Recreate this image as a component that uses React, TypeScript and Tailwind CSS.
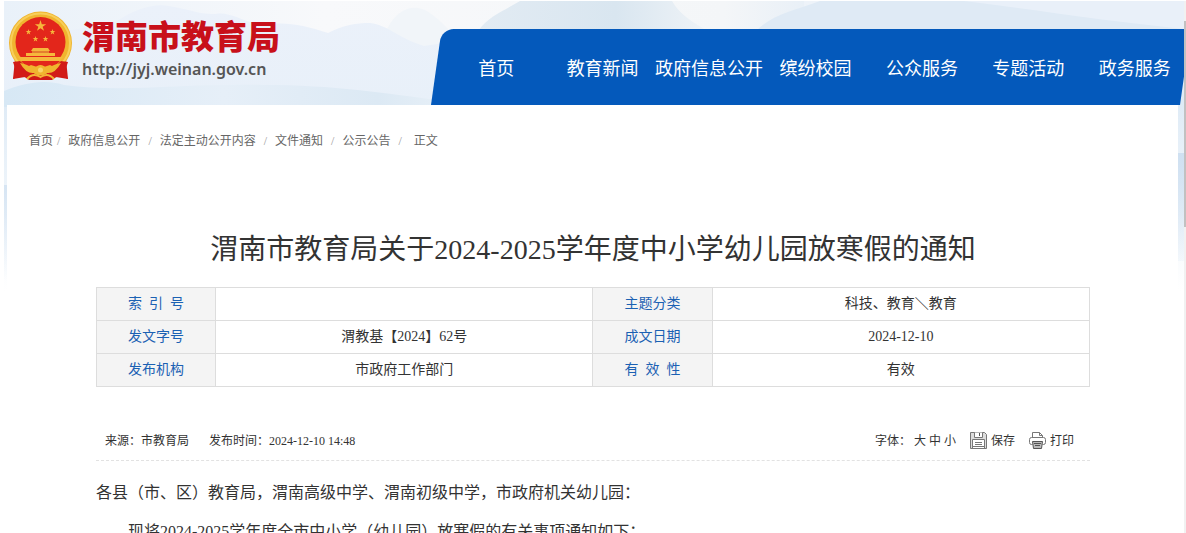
import React from 'react';

const NAV = ['首页', '教育新闻', '政府信息公开', '缤纷校园', '公众服务', '专题活动', '政务服务'];

const CRUMBS = ['首页', '政府信息公开', '法定主动公开内容', '文件通知', '公示公告'];

const ROWS = [
    ['索  引  号', '', '主题分类', '科技、教育＼教育'],
    ['发文字号', '渭教基【2024】62号', '成文日期', '2024-12-10'],
    ['发布机构', '市政府工作部门', '有  效  性', '有效'],
];

const STAR = '0,-1 0.22,-0.31 0.95,-0.31 0.36,0.12 0.59,0.81 0,0.38 -0.59,0.81 -0.36,0.12 -0.95,-0.31 -0.22,-0.31';

const Mountains: React.FC = () => (
    <svg className="absolute inset-0 h-[290px] w-full" viewBox="0 0 1180 290" preserveAspectRatio="none" aria-hidden="true">
        <defs>
            <linearGradient id="sky" x1="0" y1="0" x2="0" y2="1">
                <stop offset="0" stopColor="#eef3f9" />
                <stop offset="0.35" stopColor="#dfebf6" />
                <stop offset="1" stopColor="#ffffff" />
            </linearGradient>
            <linearGradient id="pale" x1="0" y1="0" x2="1" y2="0">
                <stop offset="0" stopColor="#e9f1f9" />
                <stop offset="0.4" stopColor="#f8f9fb" />
                <stop offset="0.9" stopColor="#f4f6f8" />
                <stop offset="1" stopColor="#e9f0f7" />
            </linearGradient>
            <linearGradient id="ridge" x1="0" y1="0" x2="0" y2="1">
                <stop offset="0" stopColor="#ebf1fa" />
                <stop offset="1" stopColor="#e8f0f9" />
            </linearGradient>
            <linearGradient id="peak" x1="0" y1="0" x2="1" y2="0">
                <stop offset="0" stopColor="#e2ebf3" />
                <stop offset="0.6" stopColor="#d9e6f0" />
                <stop offset="1" stopColor="#eff3f7" />
            </linearGradient>
            <linearGradient id="mist" x1="0" y1="0" x2="1" y2="0">
                <stop offset="0" stopColor="#d7e8f5" />
                <stop offset="0.5" stopColor="#e6eff8" />
                <stop offset="0.85" stopColor="#dce9f4" />
                <stop offset="1" stopColor="#e6eff7" />
            </linearGradient>
            <linearGradient id="slope" x1="0" y1="0" x2="0" y2="1">
                <stop offset="0" stopColor="#cfe0f1" />
                <stop offset="1" stopColor="#cfe0f1" stopOpacity="0" />
            </linearGradient>
        </defs>
        <rect width="1180" height="290" fill="url(#sky)" />
        <path d="M0 0H800V60H0Z" fill="url(#pale)" />
        <path d="M382 30C392 10 404 6 414 7C424 8 436 20 446 30V60H382Z" fill="#f1f5f9" />
        <path d="M110 22C130 8 150 2 165 5C185 8 196 14 212 13C226 10 240 22 260 24C280 20 300 24 324 32C340 24 352 22 366 22C384 24 396 38 420 45C430 44 436 42 440 42V106H0V40Z" fill="url(#ridge)" />
        <path d="M474 30C486 14 500 10 516 0H668C676 14 690 22 704 30Z" fill="url(#peak)" />
        <path d="M752 30C770 12 790 10 816 0H1180V30Z" fill="#dfeaf5" />
        <path d="M960 0H1180V28C1100 20 1040 10 960 0Z" fill="#e9f0f9" />
        <path d="M0 90C20 82 40 78 60 84C120 92 180 82 260 84C330 84 380 92 440 100V106H0Z" fill="url(#mist)" />
        <path d="M0 184H4V280H0ZM1174 152H1180V260H1174Z" fill="url(#slope)" />
    </svg>
);

const Emblem: React.FC = () => (
    <svg className="h-[70px] w-[66px] shrink-0" viewBox="0 0 66 70" aria-hidden="true">
        <path d="M7 48L58 48L60 68L48 66L44 69H21L17 66L5 68Z" fill="#cf1a17" />
        <circle cx="32.500" cy="32" r="31.500" fill="#f0b52f" />
        <circle cx="32.500" cy="32" r="29.500" fill="none" stroke="#f8cf5a" strokeWidth="2" />
        <circle cx="32.500" cy="31" r="25" fill="#e3261b" />
        <g fill="#f6b73c">
            <polygon points={STAR} transform="translate(32.500 15) scale(6)" />
            <polygon points={STAR} transform="translate(20.500 21) scale(3)" />
            <polygon points={STAR} transform="translate(44.500 21) scale(3)" />
            <polygon points={STAR} transform="translate(27.500 28) scale(3)" />
            <polygon points={STAR} transform="translate(37.500 28) scale(3)" />
            <path d="M25 37H40L42 40H41V42H47V45H18V42H24V40H23Z" />
            <path d="M10 46H55L52 50H13Z" />
        </g>
        <path d="M24 41H41" stroke="#cc2a1b" strokeWidth="0.800" />
        <path d="M13 50H52L46 56L38 52H27L19 56Z" fill="#e3261b" />
        <path d="M5 51L12 50L22 59L27 62L20 67L12 65L5 68L8 60Z" fill="#d21b18" />
        <path d="M60 51L53 50L43 59L38 62L45 67L53 65L60 68L57 60Z" fill="#d21b18" />
        <path d="M12 52Q19 53 26 58Q32.500 50 39 58Q46 53 53 52Q47 63 39 62Q32.500 67 26 62Q18 63 12 52Z" fill="#f0b52f" />
        <circle cx="32.500" cy="59" r="2.500" fill="#f9d469" />
        <path d="M19 68Q25 61 32.500 66Q40 61 46 68" fill="none" stroke="#f3b535" strokeWidth="2" />
    </svg>
);

const SaveIcon: React.FC = () => (
    <svg className="size-[17px]" viewBox="0 0 17 17" fill="none" stroke="#777" aria-hidden="true">
        <path d="M0.500 0.500H14.500L16.500 2.500V16.500H0.500Z" fill="#ddd" />
        <path d="M4.500 0.500V5.500H12.500V0.500" fill="#fff" />
        <path d="M9.500 1V4" stroke="#555" />
        <path d="M2.500 16V7.500H14.500V16" fill="#fff" />
        <path d="M2 14.500H15M5 10.500H12M5 12.500H12" />
    </svg>
);

const PrintIcon: React.FC = () => (
    <svg className="size-[17px]" viewBox="0 0 17 17" fill="none" stroke="#777" aria-hidden="true">
        <path d="M3.500 5.500V0.500H10.500L13.500 3.500V5.500" />
        <path d="M10.500 0.500V3.500H13.500" />
        <path d="M3.500 12.500H2.500Q0.500 12.500 0.500 10.500V7.500Q0.500 5.500 2.500 5.500H14.500Q16.500 5.500 16.500 7.500V10.500Q16.500 12.500 14.500 12.500H13.500" />
        <path d="M3.500 9.500H13.500L12.500 16.500H4.500Z" fill="#bbb" stroke="#555" />
        <path d="M5 11.500H12M6 13.500H11" stroke="#555" />
    </svg>
);

const App: React.FC = () => {
    return (
        <div className="flex h-screen overflow-hidden bg-white pt-px pl-1 font-['Liberation_Serif','Noto_Sans_CJK_SC',serif] text-[#333]">
            <div className="relative min-w-0 flex-1">
                <Mountains />

                <header className="relative flex h-[104px]">
                    <a href="#" className="flex w-[427px] shrink-0 items-start gap-2 pt-2.5 pl-1">
                        <Emblem />
                        <span className="flex flex-col pt-0.5">
                            <span className="font-['Noto_Sans_CJK_SC',sans-serif] text-[33px] leading-[44px] font-black text-[#c8101a]">渭南市教育局</span>
                            <span className="font-['Noto_Sans',sans-serif] text-base leading-6 font-semibold text-[#555]">http://jyj.weinan.gov.cn</span>
                        </span>
                    </a>
                    <nav className="relative mt-7 flex min-w-0 flex-1 overflow-hidden">
                        <span className="absolute inset-0 mr-1 origin-bottom -skew-x-[8deg] rounded-tl-xl bg-[#0459bb]"></span>
                        <ul className="relative -mr-1 flex flex-1 pl-3 font-['Noto_Sans_CJK_SC',sans-serif] text-lg text-white">
                            {NAV.map(item => (
                                <li key={item} className="flex flex-1 basis-0 items-center justify-center">
                                    <a href="#" className="-mx-2 whitespace-nowrap">{item}</a>
                                </li>
                            ))}
                        </ul>
                    </nav>
                </header>

                <main className="relative mr-1.5 ml-[3px] h-full bg-white">
                    <div className="flex gap-2 pt-[26px] pl-[22px] text-xs leading-5 text-[#666]">
                        {CRUMBS.map(item => (
                            <span key={item} className="flex gap-2 first:gap-1">
                                <a href="#">{item}</a>
                                <span className="text-[#999]">/</span>
                            </span>
                        ))}
                        <span className="pl-1">正文</span>
                    </div>

                    <article className="mr-[88px] ml-[89px]">
                        <h1 className="mt-[77px] text-center text-[28px] leading-[44px]">渭南市教育局关于2024-2025学年度中小学幼儿园放寒假的通知</h1>

                        <table className="mt-[15px] w-full table-fixed border-collapse text-center text-sm">
                            <colgroup>
                                <col className="w-[12%]" />
                                <col className="w-[38%]" />
                                <col className="w-[12%]" />
                                <col className="w-[38%]" />
                            </colgroup>
                            <tbody>
                                {ROWS.map(row => (
                                    <tr key={row[0]} className="h-[33px]">
                                        {row.map((cell, i) => i % 2 === 0 ? (
                                            <th key={i} scope="row" className="border border-[#ddd] bg-[#f4f4f4] font-normal whitespace-pre text-[#1b61b3]">{cell}</th>
                                        ) : (
                                            <td key={i} className="border border-[#ddd]">{cell}</td>
                                        ))}
                                    </tr>
                                ))}
                            </tbody>
                        </table>

                        <div className="mt-[34px] flex h-10 items-center justify-between border-b border-dashed border-[#e2e2e2] pr-4 pl-[9px] text-xs">
                            <div className="flex gap-5">
                                <span>来源：市教育局</span>
                                <span>发布时间：2024-12-10 14:48</span>
                            </div>
                            <div className="flex items-center gap-3.5">
                                <div className="flex gap-[3px]">
                                    <span>字体：</span>
                                    <button type="button">大</button>
                                    <button type="button">中</button>
                                    <button type="button">小</button>
                                </div>
                                <button type="button" className="flex items-center gap-1"><SaveIcon />保存</button>
                                <button type="button" className="flex items-center gap-1"><PrintIcon />打印</button>
                            </div>
                        </div>

                        <div className="mt-3 text-base leading-[39px]">
                            <p>各县（市、区）教育局，渭南高级中学、渭南初级中学，市政府机关幼儿园：</p>
                            <p className="indent-8">现将2024-2025学年度全市中小学（幼儿园）放寒假的有关事项通知如下：</p>
                        </div>
                    </article>
                </main>
            </div>

            <div className="w-0.5 shrink-0 bg-[#f1f1f1] pt-5">
                <div className="h-[206px] bg-[#c1c1c1]"></div>
            </div>
        </div>
    );
};

export default App;
